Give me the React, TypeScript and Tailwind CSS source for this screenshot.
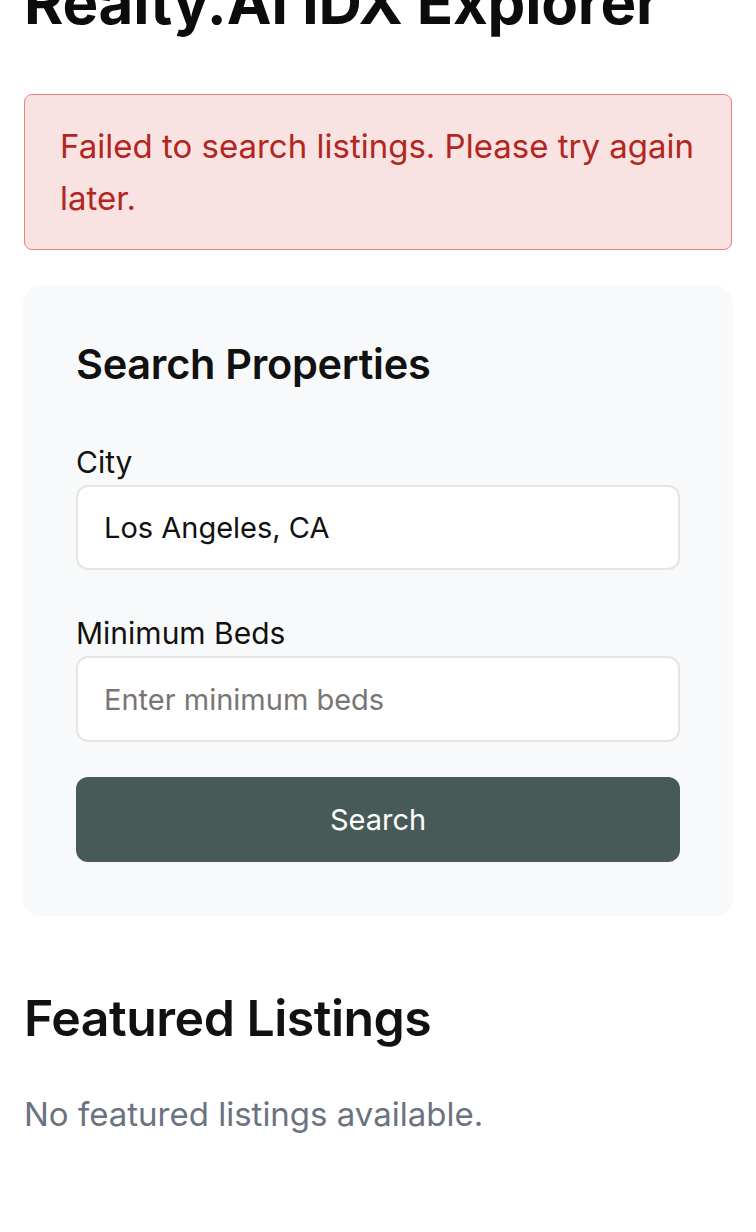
export default function App() {
  return (
    <div className="min-h-screen bg-white font-['Inter',sans-serif] text-[#111111]">
      <div className="mt-[-34px] px-6 pb-24">
        <h1 className="text-[60px] font-bold leading-[72px] tracking-[-0.2px] text-[#0c0c0a]">Realty.AI IDX Explorer</h1>

        <div className="mt-[56px] rounded-lg border border-[#e8827f] bg-[#f9e2e2] px-[35px] py-[25px] text-[33px] leading-[52px] text-[#b3261e]">
          Failed to search listings. Please try again later.
        </div>

        <section className="mt-9 rounded-2xl bg-[#f8f9fa] px-[52px] pt-[52px] pb-[52px] shadow-[0_1px_3px_rgba(0,0,0,0.05)]">
          <h2 className="text-[41.5px] font-semibold leading-[52px] tracking-[-0.3px]">Search Properties</h2>

          <div className="mt-[52px] flex flex-col gap-[43px]">
            <div className="flex flex-col">
              <label className="text-[30px] leading-[40px]">City</label>
              <input
                className="mt-[3px] h-[85px] rounded-xl border-2 border-[#e5e5e5] bg-white px-[26px] text-[29px] text-[#111111] outline-none"
                defaultValue="Los Angeles, CA"
              />
            </div>
            <div className="flex flex-col">
              <label className="text-[30px] leading-[40px]">Minimum Beds</label>
              <input
                className="mt-[3px] h-[86px] rounded-xl border-2 border-[#e5e5e5] bg-white px-[26px] text-[29px] text-[#111111] outline-none placeholder:text-[#7a7573]"
                placeholder="Enter minimum beds"
              />
            </div>
          </div>

          <button className="mt-[35px] h-[85px] w-full rounded-xl bg-[#475a57] text-[29px] text-white">Search</button>
        </section>

        <h2 className="mt-[74px] text-[50px] font-semibold leading-[60px] tracking-[-0.5px]">Featured Listings</h2>
        <p className="mt-[44px] text-[33px] leading-[44px] text-[#6b7280]">No featured listings available.</p>
      </div>
    </div>
  );
}
